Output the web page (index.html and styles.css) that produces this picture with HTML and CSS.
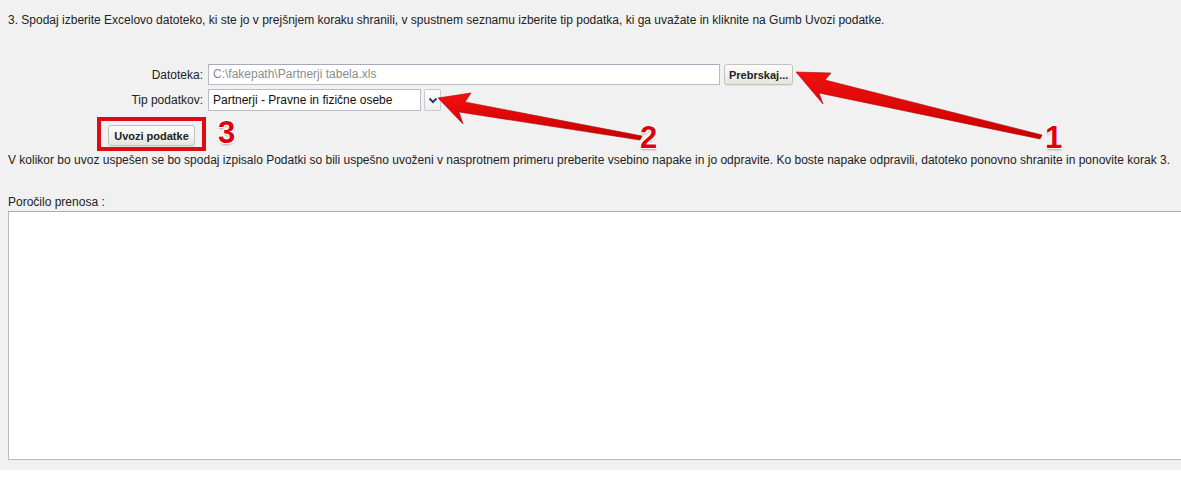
FILE: index.html
```html
<!DOCTYPE html>
<html lang="sl">
<head>
<meta charset="utf-8">
<title>Uvoz podatkov</title>
<link rel="stylesheet" href="styles.css">
</head>
<body>
<div class="page">
  <p class="intro">3. Spodaj izberite Excelovo datoteko, ki ste jo v prejšnjem koraku shranili, v spustnem seznamu izberite tip podatka, ki ga uvažate in kliknite na Gumb Uvozi podatke.</p>

  <div class="form">
    <label class="lbl">Datoteka:</label>
    <div class="field">
      <div class="file-input">C:\fakepath\Partnerji tabela.xls</div>
      <button class="btn">Prebrskaj...</button>
    </div>
    <label class="lbl">Tip podatkov:</label>
    <div class="field">
      <div class="select">Partnerji - Pravne in fizične osebe</div>
      <div class="select-btn">
        <svg width="10" height="7" viewBox="0 0 10 7"><path d="M1.5 1.5 L5 5 L8.5 1.5" fill="none" stroke="#2b3d66" stroke-width="2"/></svg>
      </div>
    </div>
  </div>

  <div class="import-row">
    <div class="highlight">
      <button class="btn">Uvozi podatke</button>
    </div>
    <span class="num num3">3</span>
  </div>

  <p class="note">V kolikor bo uvoz uspešen se bo spodaj izpisalo Podatki so bili uspešno uvoženi v nasprotnem primeru preberite vsebino napake in jo odpravite. Ko boste napake odpravili, datoteko ponovno shranite in ponovite korak 3.</p>

  <p class="report-label">Poročilo prenosa :</p>
  <div class="report"></div>

  <svg class="arrows" width="1181" height="484" viewBox="0 0 1181 484">
    <defs>
      <linearGradient id="g" x1="0" y1="0" x2="0" y2="1">
        <stop offset="0" stop-color="#f21010"/>
        <stop offset="1" stop-color="#c80000"/>
      </linearGradient>
    </defs>
    <path d="M796 72 L831 73 L825 80 L1042 135 L1040 139 L819 93 L823 104 Z" fill="url(#g)" stroke="#b00000" stroke-width="0.6" stroke-linejoin="round"/>
    <path d="M438 98 L471 93 L465 102 L642 136 L640 140 L459 112 L463 124 Z" fill="url(#g)" stroke="#b00000" stroke-width="0.6" stroke-linejoin="round"/>
  </svg>
  <span class="num num1">1</span>
  <span class="num num2">2</span>
</div>
</body>
</html>
```

FILE: styles.css
```css
html, body {
  margin: 0;
  padding: 0;
  background: #ffffff;
  overflow: hidden;
}

.page {
  position: relative;
  height: 470px;
  background: #f1f1f1;
  padding: 13px 0 0 8px;
  box-sizing: border-box;
  font-family: "Liberation Sans", Arial, sans-serif;
  font-size: 12px;
  color: #222;
}

p {
  margin: 0;
  line-height: 14px;
}

.form {
  display: grid;
  grid-template-columns: 195px auto;
  column-gap: 5px;
  row-gap: 4px;
  margin-top: 37px;
  align-items: center;
}

.lbl {
  text-align: right;
  line-height: 14px;
}

.field {
  display: flex;
  align-items: center;
  gap: 4px;
}

.file-input {
  width: 506px;
  height: 19px;
  line-height: 19px;
  border: 1px solid #b9bcc8;
  border-top-color: #a7aab8;
  background: #fff;
  color: #8c8c8c;
  padding-left: 4px;
  font-size: 12px;
}

.btn {
  font-family: "Liberation Sans", Arial, sans-serif;
  font-weight: bold;
  font-size: 11px;
  color: #222;
  height: 21px;
  padding: 0 4px;
  border: 1px solid #c2c2c2;
  border-radius: 3px;
  background: linear-gradient(#fbfbfb, #f2f2ee 55%, #e3e6d8);
  box-shadow: 0 1px 0 #e0e0e0;
  cursor: pointer;
  white-space: nowrap;
}

.select {
  width: 207px;
  height: 20px;
  line-height: 20px;
  border: 1px solid #b9bcc8;
  background: #fff;
  padding-left: 4px;
  color: #111;
}

.select-btn {
  width: 15px;
  height: 20px;
  border: 1px solid #c7cbcf;
  border-radius: 2px;
  background: linear-gradient(#fdfdfd, #eef0ea);
  display: flex;
  align-items: center;
  justify-content: center;
  margin-left: -1px;
}

.import-row {
  display: flex;
  align-items: flex-start;
  margin-top: 6px;
  margin-left: 89px;
  gap: 12px;
}

.highlight {
  border: 4px solid #dd0b14;
  padding: 4px 7px 1px 7px;
  display: flex;
}

.highlight .btn {
  height: 21px;
  width: 87px;
  padding: 0;
}

.num {
  font-family: "Liberation Sans", Arial, sans-serif;
  font-weight: bold;
  font-size: 31px;
  line-height: 28px;
  color: #e0000d;
  text-shadow: -1px -1px 0 #fff, 1px -1px 0 #fff, -1px 1px 0 #fff, 1px 1px 0 #fff, 0 2px 2px #aaa;
}

.num3 {
  margin-top: 2px;
}

.num1, .num2 {
  position: absolute;
  top: 124px;
}

.num1 { left: 1045px; }
.num2 { left: 640px; }

.note {
  margin-top: 2px;
}

.report-label {
  margin-top: 28px;
}

.report {
  margin-top: 2px;
  width: 1182px;
  height: 247px;
  background: #fff;
  border: 1px solid #b6b8c6;
  border-top-color: #a9abbb;
}

.arrows {
  position: absolute;
  left: 0;
  top: 0;
  pointer-events: none;
}
```
